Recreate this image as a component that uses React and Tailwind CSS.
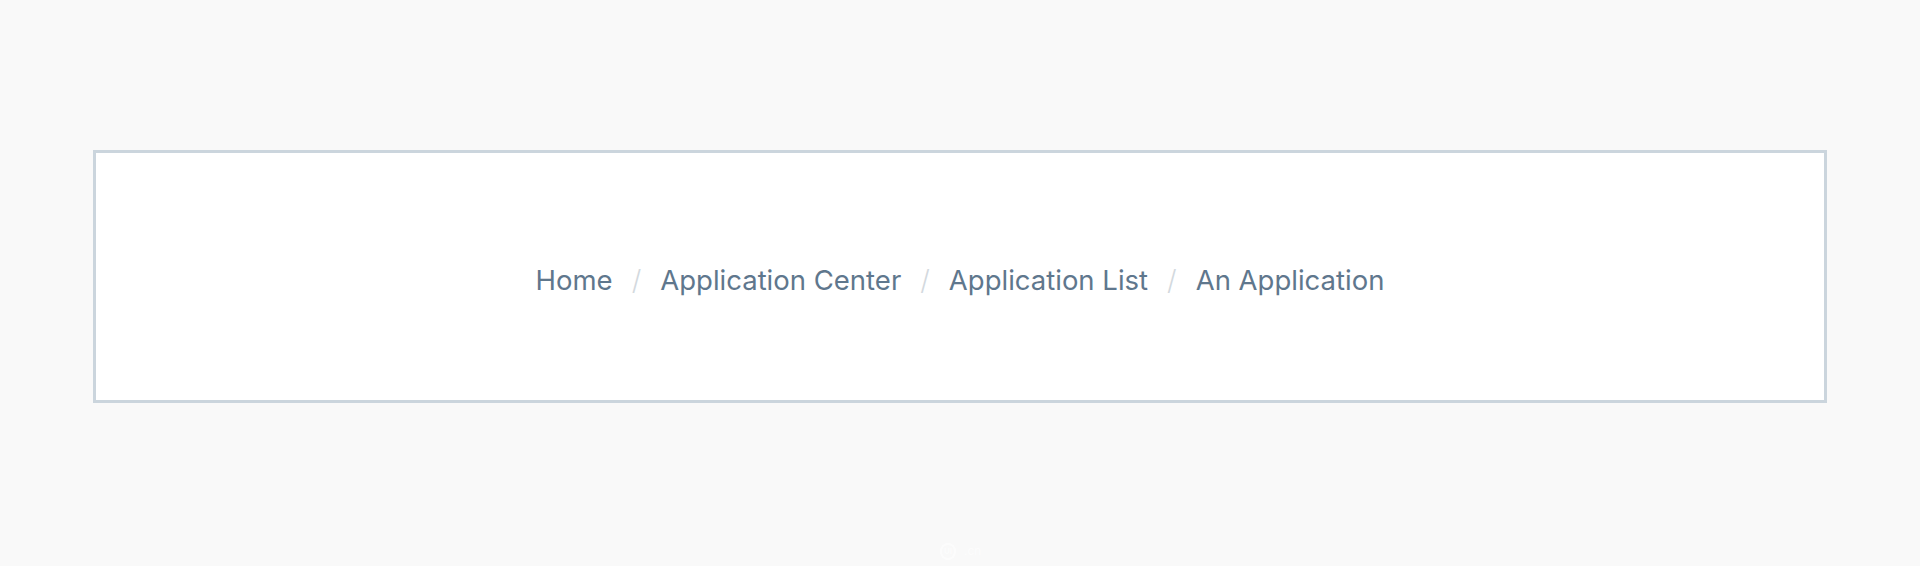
export default function App() {
  const items = ["Home", "Application Center", "Application List", "An Application"];
  return (
    <div className="relative w-[1920px] h-[566px] bg-[#f9f9f9] pt-[150px] pl-[93px]" style={{ fontFamily: 'Inter, "Liberation Sans", Arial, sans-serif' }}>
      <div className="w-[1734px] h-[253px] border-[3px] border-[#cbd5dd] bg-white flex items-center justify-center">
        <nav className="flex items-center text-[27.5px] leading-none text-[#5f778d] pt-[8px]">
          {items.map((t, i) => (
            <span key={t} className="flex items-center">
              {i > 0 && <span className="mx-[19px] text-[#d3d9de] font-light">/</span>}
              <span>{t}</span>
            </span>
          ))}
        </nav>
      </div>
      <div className="absolute left-[940px] top-[542px] flex items-center gap-[8px] opacity-60">
        <div className="w-[16px] h-[17px] rounded-full border-[2px] border-white flex items-center justify-center text-[8px] font-bold text-white">UI</div>
        <span className="text-[12px] text-white">.cn</span>
      </div>
    </div>
  );
}
